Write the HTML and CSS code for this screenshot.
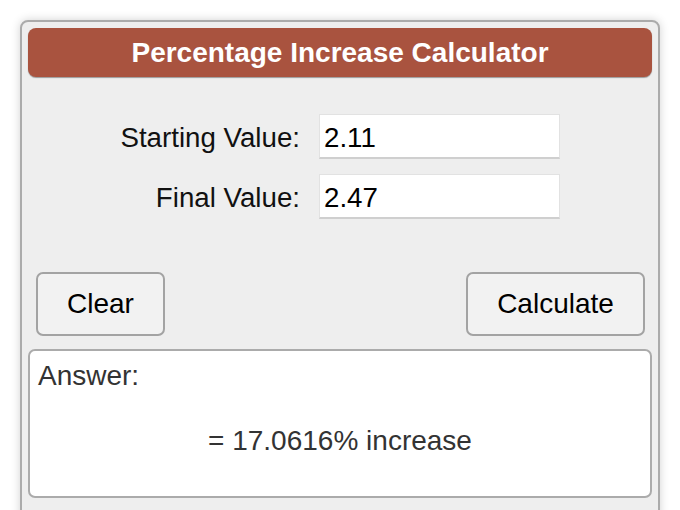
FILE: index.html
```html
<!DOCTYPE html>
<html>
<head>
<meta charset="utf-8">
<link rel="stylesheet" href="styles.css">
</head>
<body>
<div class="page">
  <div class="calc">
    <div class="header">Percentage Increase Calculator</div>
    <div class="form">
      <label class="label">Starting Value:</label>
      <input class="field" type="text" value="2.11">
      <label class="label">Final Value:</label>
      <input class="field" type="text" value="2.47">
    </div>
    <div class="actions">
      <button class="btn btn-clear">Clear</button>
      <button class="btn btn-calc">Calculate</button>
    </div>
    <div class="answer">
      <div class="answer-title">Answer:</div>
      <div class="answer-result">= 17.0616% increase</div>
    </div>
  </div>
</div>
</body>
</html>
```
FILE: styles.css
```css
html, body {
  margin: 0;
  padding: 0;
  background: #fff;
  font-family: "Liberation Sans", Arial, sans-serif;
}
.page {
  padding: 20px 20px 0 20px;
  height: 510px;
  box-sizing: border-box;
  overflow: hidden;
}
.calc {
  width: 640px;
  height: 560px;
  box-sizing: border-box;
  border: 2px solid #ababab;
  border-radius: 8px;
  background: #eeeeee;
  padding: 6px;
  box-shadow: 0 0 10px rgba(0, 0, 0, 0.18);
}
.header {
  height: 49px;
  background: #a9533f;
  border-radius: 8px;
  color: #fff;
  font-weight: bold;
  font-size: 28px;
  line-height: 49px;
  text-align: center;
  box-shadow: 0 1px 1px rgba(0, 0, 0, 0.35);
}
.form {
  display: grid;
  grid-template-columns: 272px 241px;
  grid-auto-rows: 45px;
  column-gap: 19px;
  row-gap: 15px;
  margin-top: 37px;
}
.label {
  justify-self: end;
  align-self: center;
  font-size: 27.7px;
  color: #111;
  padding-top: 3px;
}
.field {
  box-sizing: border-box;
  width: 241px;
  height: 45px;
  margin: 0;
  border: 1px solid #e2e2e2;
  border-bottom: 2px solid #cfcfcf;
  background: #fff;
  font-family: "Liberation Sans", Arial, sans-serif;
  font-size: 27.7px;
  color: #000;
  padding: 3px 4px 0 4px;
  outline: none;
}
.actions {
  display: flex;
  justify-content: space-between;
  margin-top: 53px;
  padding: 0 7px 0 8px;
}
.btn {
  height: 64px;
  box-sizing: border-box;
  border: 2px solid #a3a3a3;
  border-radius: 7px;
  background: #f2f2f2;
  font-family: "Liberation Sans", Arial, sans-serif;
  font-size: 28px;
  color: #000;
  padding: 0;
}
.btn-clear { width: 129px; }
.btn-calc { width: 179px; }
.answer {
  margin-top: 13px;
  height: 149px;
  box-sizing: border-box;
  border: 2px solid #ababab;
  border-radius: 7px;
  background: #fff;
  padding: 10px 8px 0 8px;
  color: #333;
  font-size: 28px;
}
.answer-title {
  line-height: 30px;
}
.answer-result {
  margin-top: 35px;
  text-align: center;
  line-height: 30px;
}
```
